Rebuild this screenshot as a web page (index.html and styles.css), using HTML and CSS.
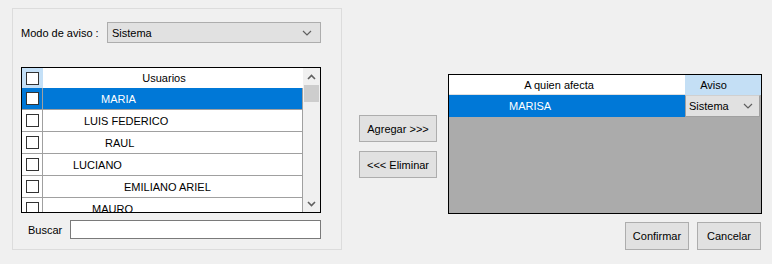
FILE: index.html
```html
<!DOCTYPE html>
<html lang="es">
<head>
  <meta charset="UTF-8">
  <title>Avisos</title>
  <link rel="stylesheet" href="styles.css">
</head>
<body>
  <div class="panel">
    <div class="mode-row">
      <label class="mode-label">Modo de aviso :</label>
      <div class="combo">
        <span>Sistema</span>
        <svg class="chev" width="10" height="6" viewBox="0 0 10 6"><polyline points="1,1 5,5 9,1" fill="none" stroke="#606060" stroke-width="1.2"/></svg>
      </div>
    </div>

    <div class="grid users">
      <div class="grid-body">
        <div class="row head">
          <div class="check-cell"><span class="box"></span></div>
          <div class="name-cell center">Usuarios</div>
        </div>
        <div class="row selected">
          <div class="check-cell"><span class="box"></span></div>
          <div class="name-cell" style="--indent: 58px">MARIA</div>
        </div>
        <div class="row">
          <div class="check-cell"><span class="box"></span></div>
          <div class="name-cell" style="--indent: 41px">LUIS FEDERICO</div>
        </div>
        <div class="row">
          <div class="check-cell"><span class="box"></span></div>
          <div class="name-cell" style="--indent: 62px">RAUL</div>
        </div>
        <div class="row">
          <div class="check-cell"><span class="box"></span></div>
          <div class="name-cell" style="--indent: 30px">LUCIANO</div>
        </div>
        <div class="row">
          <div class="check-cell"><span class="box"></span></div>
          <div class="name-cell" style="--indent: 81px">EMILIANO ARIEL</div>
        </div>
        <div class="row">
          <div class="check-cell"><span class="box"></span></div>
          <div class="name-cell" style="--indent: 49px">MAURO</div>
        </div>
      </div>
      <div class="scrollbar">
        <div class="arrow">
          <svg width="9" height="6" viewBox="0 0 9 6"><polyline points="1,5 4.5,1.5 8,5" fill="none" stroke="#606060" stroke-width="1.6"/></svg>
        </div>
        <div class="thumb"></div>
        <div class="track"></div>
        <div class="arrow">
          <svg width="9" height="6" viewBox="0 0 9 6"><polyline points="1,1 4.5,4.5 8,1" fill="none" stroke="#606060" stroke-width="1.6"/></svg>
        </div>
      </div>
    </div>

    <div class="search-row">
      <label class="search-label">Buscar</label>
      <input class="search-input" type="text">
    </div>
  </div>

  <div class="middle">
    <button class="btn move">Agregar &gt;&gt;&gt;</button>
    <button class="btn move">&lt;&lt;&lt; Eliminar</button>
  </div>

  <div class="right">
    <div class="grid affected">
      <div class="arow ahead">
        <div class="who-cell head-cell">A quien afecta</div>
        <div class="aviso-cell head-aviso">Aviso</div>
      </div>
      <div class="arow">
        <div class="who-cell picked">MARISA</div>
        <div class="aviso-cell">
          <div class="mini-combo">
            <span>Sistema</span>
            <svg width="10" height="6" viewBox="0 0 10 6"><polyline points="1,1 5,5 9,1" fill="none" stroke="#606060" stroke-width="1.2"/></svg>
          </div>
        </div>
      </div>
    </div>
    <div class="actions">
      <button class="btn action">Confirmar</button>
      <button class="btn action">Cancelar</button>
    </div>
  </div>
</body>
</html>
```

FILE: styles.css
```css
body {
  margin: 0;
  width: 772px;
  height: 264px;
  background: #f0f0f0;
  font-family: "Liberation Sans", Arial, sans-serif;
  font-size: 11px;
  color: #000;
  display: flex;
  align-items: flex-start;
  overflow: hidden;
}

.panel {
  box-sizing: border-box;
  width: 330px;
  height: 242px;
  margin: 8px 0 0 12px;
  padding: 13px 8px 0 8px;
  border: 1px solid #dcdcdc;
}

.mode-row {
  display: flex;
  align-items: center;
}

.mode-label {
  width: 86px;
}

.combo {
  box-sizing: border-box;
  width: 214px;
  height: 21px;
  padding: 0 8px 0 4px;
  background: #e1e1e1;
  border: 1px solid #adadad;
  display: flex;
  align-items: center;
  justify-content: space-between;
}

.grid {
  box-sizing: border-box;
  border: 1px solid #000;
  display: flex;
}

.users {
  width: 300px;
  height: 146px;
  margin-top: 24px;
}

.grid-body {
  width: 281px;
  overflow: hidden;
  background: #fff;
}

.row {
  display: flex;
  height: 22px;
  box-sizing: border-box;
  border-bottom: 1px solid #a0a0a0;
}

.row.head {
  height: 20px;
  border-bottom: none;
}

.check-cell {
  width: 20px;
  border-right: 1px solid #a0a0a0;
  display: flex;
  align-items: center;
  justify-content: center;
}

.head .check-cell {
  background: #c4e0f7;
  border-right: none;
  width: 21px;
}

.box {
  box-sizing: border-box;
  width: 13px;
  height: 13px;
  background: #fff;
  border: 1px solid #333;
}

.name-cell {
  flex: 1;
  border-right: 1px solid #a0a0a0;
  padding-left: var(--indent, 0);
  display: flex;
  align-items: center;
}

.name-cell.center {
  justify-content: center;
  padding-right: 18px;
  border-right: none;
}

.selected {
  background: #0078d7;
  color: #fff;
}

.scrollbar {
  width: 17px;
  background: #f0f0f0;
  display: flex;
  flex-direction: column;
}

.arrow {
  height: 17px;
  display: flex;
  align-items: center;
  justify-content: center;
}

.thumb {
  height: 17px;
  margin: 0 1px;
  background: #cdcdcd;
}

.track {
  flex: 1;
}

.search-row {
  display: flex;
  align-items: center;
  margin-top: 7px;
}

.search-label {
  width: 42px;
  padding-left: 7px;
}

.search-input {
  box-sizing: border-box;
  width: 251px;
  height: 19px;
  margin: 0;
  border: 1px solid #7a7a7a;
  background: #fff;
}

.btn {
  box-sizing: border-box;
  background: #e1e1e1;
  border: 1px solid #adadad;
  font-family: inherit;
  font-size: 11px;
  color: #000;
  padding: 0;
}

.middle {
  display: flex;
  flex-direction: column;
  gap: 9px;
  margin: 115px 0 0 17px;
}

.move {
  width: 78px;
  height: 27px;
}

.right {
  margin: 74px 0 0 11px;
}

.affected {
  width: 314px;
  height: 140px;
  background: #ababab;
  flex-direction: column;
}

.arow {
  display: flex;
  height: 22px;
}

.arow.ahead {
  height: 20px;
}

.who-cell {
  width: 236px;
  display: flex;
  align-items: center;
}

.head-cell {
  background: #fff;
  justify-content: center;
  padding-right: 16px;
  box-sizing: border-box;
  border-bottom: 1px solid #e0e0e0;
}

.picked {
  background: #0078d7;
  color: #fff;
  padding-left: 60px;
  box-sizing: border-box;
}

.aviso-cell {
  width: 76px;
  box-sizing: border-box;
  display: flex;
  align-items: center;
}

.head-aviso {
  background: #c4dff5;
  justify-content: center;
  padding-right: 19px;
}

.mini-combo {
  box-sizing: border-box;
  width: 75px;
  height: 22px;
  padding: 0 6px 0 3px;
  background: #e1e1e1;
  border: 1px solid #a0a0a0;
  border-top-color: #d0d0d0;
  display: flex;
  align-items: center;
  justify-content: space-between;
}

.actions {
  display: flex;
  justify-content: flex-end;
  gap: 8px;
  margin-top: 8px;
  padding-right: 1px;
}

.action {
  width: 64px;
  height: 28px;
}
```
